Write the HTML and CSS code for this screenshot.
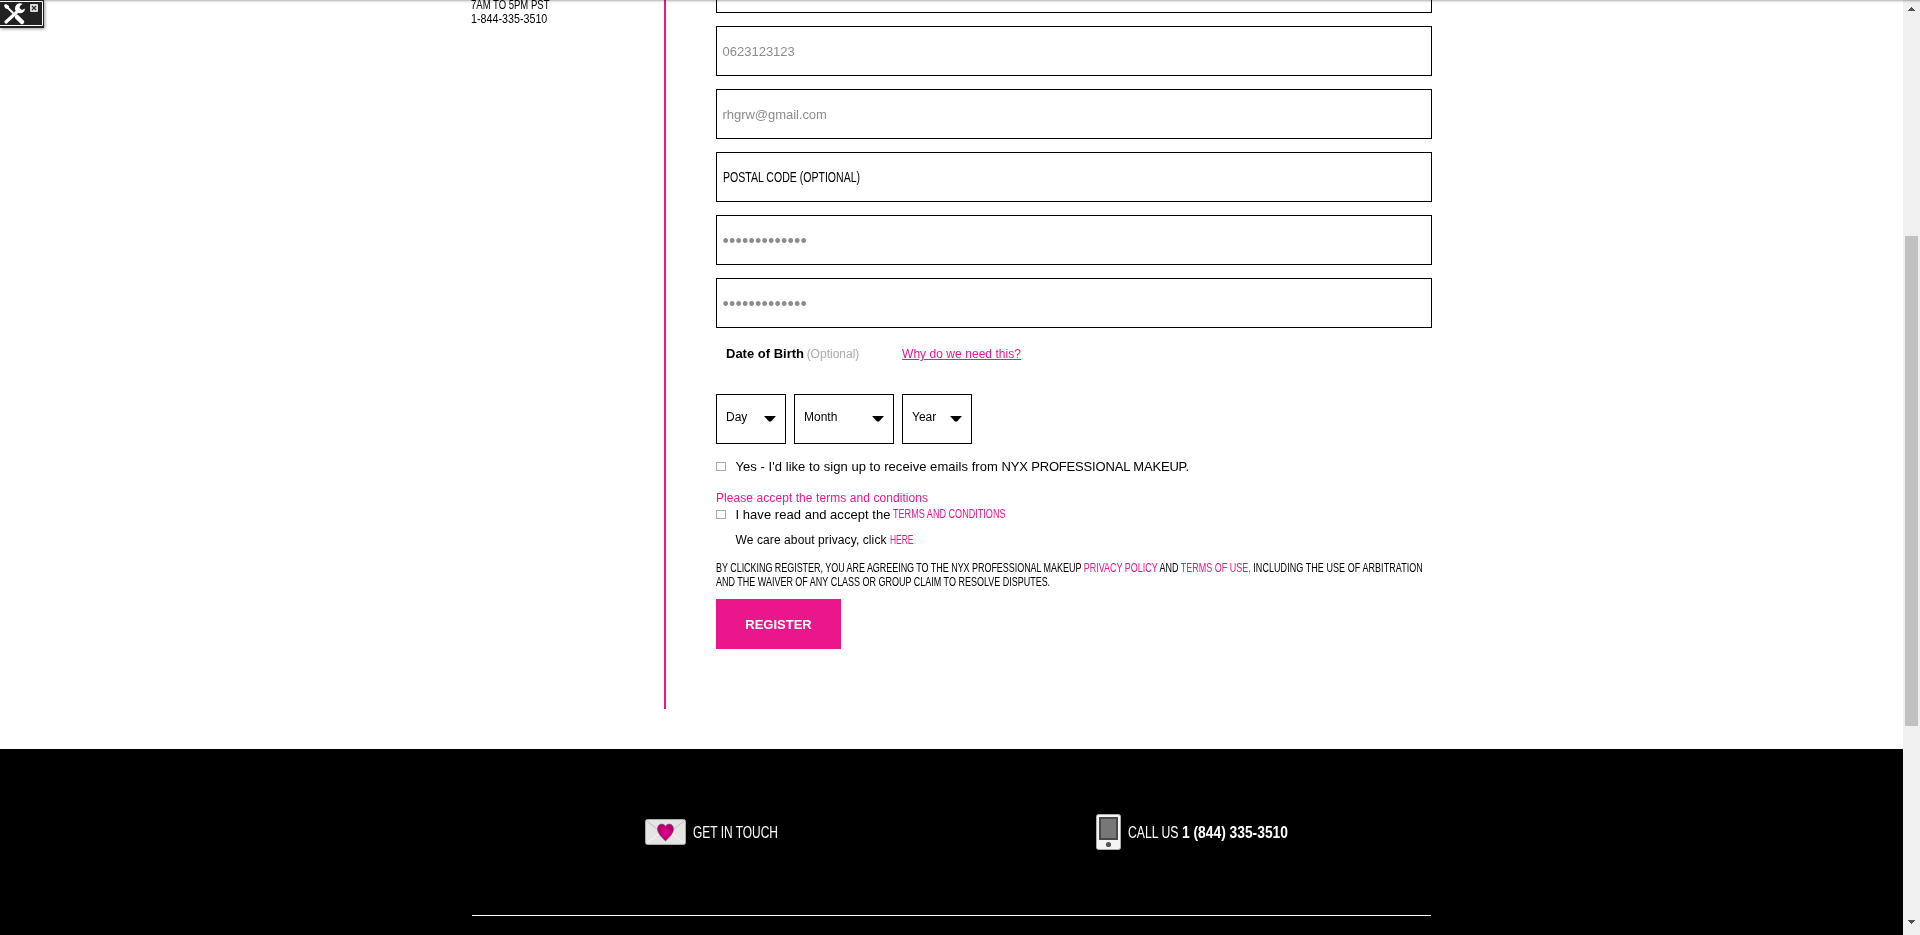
FILE: index.html
```
<!DOCTYPE html>
<html lang="en">
<head>
<meta charset="utf-8">
<title>Register</title>
<link rel="stylesheet" href="styles.css">
</head>
<body>
<div class="page">
  <main class="main">
    <aside class="side">
      <p class="side-line"><span class="cond hours">7AM TO 5PM PST</span></p>
      <p class="side-line"><span class="cond phone">1-844-335-3510</span></p>
    </aside>
    <form class="form">
      <div class="field field-cut"></div>
      <div class="field">0623123123</div>
      <div class="field email">rhgrw@gmail.com</div>
      <div class="field field-label"><span class="cond postal">POSTAL CODE (OPTIONAL)</span></div>
      <div class="field dots">•••••••••••••</div>
      <div class="field dots">•••••••••••••</div>
      <div class="dob">
        <div class="dob-title"><b>Date of Birth</b> <span class="optional">(Optional)</span></div>
        <a class="why">Why do we need this?</a>
      </div>
      <div class="selects">
        <div class="select">Day<svg class="caret" viewBox="0 0 12 6"><path d="M0 0H12L7 5.500H5Z"/></svg></div>
        <div class="select month"><span>Month</span><svg class="caret" viewBox="0 0 12 6"><path d="M0 0H12L7 5.500H5Z"/></svg></div>
        <div class="select">Year<svg class="caret" viewBox="0 0 12 6"><path d="M0 0H12L7 5.500H5Z"/></svg></div>
      </div>
      <div class="check news"><i class="box"></i><span>Yes - I'd like to sign up to receive emails from <span class="brand">NYX PROFESSIONAL MAKEUP.</span></span></div>
      <p class="error">Please accept the terms and conditions</p>
      <div class="check terms"><i class="box"></i><span>I have read and accept the</span><a class="cond terms-link">TERMS AND CONDITIONS</a></div>
      <p class="privacy"><span>We care about privacy, click</span><a class="cond here">HERE</a></p>
      <div class="legal">
        <p class="cond"><span class="lead">BY CLICKING REGISTER, YOU ARE AGREEING TO THE NYX PROFESSIONAL MAKEUP </span><a>PRIVACY POLICY</a> AND <a>TERMS OF USE,</a><span class="tail"> INCLUDING THE USE OF ARBITRATION</span></p>
        <p class="cond">AND THE WAIVER OF ANY CLASS OR GROUP CLAIM TO RESOLVE DISPUTES.</p>
      </div>
      <div class="register">REGISTER</div>
    </form>
  </main>
  <footer class="footer">
    <div class="contact">
      <div class="touch">
        <svg class="mail" viewBox="0 0 41 26">
          <defs><radialGradient id="heart"><stop offset="0" stop-color="#ee0090"/><stop offset="1" stop-color="#a8006c"/></radialGradient></defs>
          <rect x=".5" y=".5" width="40" height="25" rx="2" fill="#e4e4e4" stroke="#aaa"/>
          <path d="M2 2L17 14M39 2L24 14" stroke="#bcbcbc" fill="none"/>
          <path d="M2 24L16 13M39 24L25 13" stroke="#fafafa" fill="none"/>
          <path d="M20.500 22C17 18.500 12.500 14.500 12.500 10C12.500 4.500 18.500 3.500 20.500 7.500C22.500 3.500 28.500 4.500 28.500 10C28.500 14.500 24 18.500 20.500 22Z" fill="url(#heart)" stroke="#8a4c74" stroke-width=".6"/>
        </svg>
        <span class="cond touch-text">GET IN TOUCH</span>
      </div>
      <div class="call">
        <svg class="device" viewBox="0 0 25 36">
          <rect x=".5" y=".5" width="24" height="35" rx="2" fill="#f4f4f4" stroke="#aaa"/>
          <rect x="3" y="3" width="19" height="23" fill="#484848"/>
          <rect x="5" y="5" width="15" height="19" fill="#777"/>
          <circle cx="12.500" cy="30.500" r="2.600" fill="#555"/>
        </svg>
        <span class="cond call-text">CALL US</span>
        <b class="cond call-number">1 (844) 335-3510</b>
      </div>
    </div>
  </footer>
</div>
<div class="scrollbar">
  <svg class="arrow" viewBox="0 0 7 4"><path d="M0 4V3H1V2H2V1H3V0H4V1H5V2H6V3H7V4Z"/></svg>
  <div class="thumb"></div>
  <svg class="arrow" viewBox="0 0 7 4"><path d="M0 0V1H1V2H2V3H3V4H4V3H5V2H6V1H7V0Z"/></svg>
</div>
<div class="topline"></div>
<div class="tool">
  <svg viewBox="0 0 44 28">
    <rect x="0" y="0" width="44" height="28" fill="#222"/>
    <path d="M0 1.500H42.500V25.500H0" fill="none" stroke="#fff"/>
    <path d="M6 6L14 14" stroke="#fff" stroke-width="2"/>
    <path d="M4 5L6 4L9 6V8L7 9L5 8Z" fill="#fff"/>
    <path d="M17 17L22 22" stroke="#fff" stroke-width="4.500" stroke-linecap="round"/>
    <path d="M6 22L19 10" stroke="#fff" stroke-width="3.200" stroke-linecap="round"/>
    <path d="M22.500 4A5 5 0 1 0 25 8.500L22 10L19.500 8L20 6Z" fill="#fff"/>
    <rect x="30" y="4" width="8" height="8" rx="1" fill="#ddd"/>
    <path d="M32 6L36 10M36 6L32 10" stroke="#333" stroke-width="1.300"/>
  </svg>
</div>
</body>
</html>
```
FILE: styles.css
```
* { box-sizing: border-box; }
body {
  margin: 0;
  height: 935px;
  overflow: hidden;
  display: flex;
  background: #fff;
  color: #000;
  font: 13px "Liberation Sans", Arial, sans-serif;
  white-space: nowrap;
}
p { margin: 0; }
svg { display: block; flex: none; }
a { color: #ec168c; }

/* condensed lettering */
.cond { display: inline-block; transform-origin: 0 50%; }

.page { width: 1903px; }
.main { display: flex; height: 749px; padding-left: 472px; }
.side { width: 192px; }
.side-line { height: 14px; line-height: 14px; margin-left: -1px; }
.side-line:first-child { height: 12px; line-height: 9px; }
.hours { transform: scaleX(.732); }
.phone { transform: scaleX(.825); }

.form {
  height: 709px;
  width: 768px;
  border-left: 2px solid #ec168c;
  padding-left: 50px;
}
.field {
  height: 50px;
  margin-bottom: 13px;
  border: 1px solid #000;
  padding-left: 5.5px;
  line-height: 49px;
  color: #8c8c8c;
}
.field-cut { height: 13px; border-top: 0; }
.email { letter-spacing: -.04px; }
.field-label { font-size: 14px; color: #000; }
.postal { transform: scaleX(.753); }
.dots { font-size: 18px; letter-spacing: .2px; padding-left: 5.6px; line-height: 51px; }
.dots + .dots { margin-bottom: 0; }

.dob { display: flex; height: 51px; line-height: 51px; margin-bottom: 15px; padding-left: 10px; }
.dob-title { width: 176px; }
.optional { font-size: 12px; color: #aaa; margin-left: -1px; }
.why { font-size: 12px; line-height: 52px; text-decoration: underline; letter-spacing: .05px; }

.selects { display: flex; gap: 8px; }
.select {
  display: flex;
  justify-content: space-between;
  width: 70px;
  height: 50px;
  padding: 0 9px;
  border: 1px solid #000;
  font-size: 12px;
  line-height: 44px;
}
.month { width: 100px; }
.caret { width: 12px; height: 6px; margin-top: 21px; }

.check { display: flex; align-items: center; }
.box { width: 10px; height: 9px; margin-right: 9.5px; border: 1px solid #aaa; }
.news { height: 45px; letter-spacing: .05px; }
.brand { letter-spacing: -.17px; }
.error { height: 18px; line-height: 18px; font-size: 12px; letter-spacing: .07px; color: #ec168c; }
.terms { height: 15px; line-height: 15px; letter-spacing: .04px; }
.terms-link { font-size: 12px; line-height: 17px; margin-left: 3px; transform: scaleX(.757); letter-spacing: 0; }
.privacy { height: 36px; line-height: 36px; padding-left: 19.5px; font-size: 12px; letter-spacing: .1px; }
.here { margin-left: 3px; transform: scaleX(.705); letter-spacing: 0; }
.legal { padding-top: 3px; height: 41px; line-height: 14px; }
.legal .cond { display: block; transform: scaleX(.691); }
.lead { letter-spacing: -.05px; }
.tail { letter-spacing: .1px; }
.register {
  width: 125px;
  height: 50px;
  background: #ec168c;
  color: #fff;
  font-weight: bold;
  line-height: 51px;
  text-align: center;
}

.footer { height: 186px; padding-left: 472px; background: #000; color: #fff; }
.contact {
  display: flex;
  height: 167px;
  width: 959px;
  padding: 65px 0 0 173px;
  border-bottom: 1px solid #fff;
  font-size: 16px;
}
.touch, .call { display: flex; align-items: center; height: 36px; line-height: 20px; }
.touch { width: 451px; }
.mail { width: 41px; height: 26px; }
.device { width: 25px; height: 36px; }
.touch .cond, .call .cond { padding-top: 2px; }
.touch-text { margin-left: 7px; transform: scaleX(.747); }
.call-text { width: 54px; margin-left: 7px; transform: scaleX(.764); }
.call-number { transform: scaleX(.863); }

.scrollbar {
  display: flex;
  flex-direction: column;
  align-items: center;
  width: 17px;
  height: 935px;
  padding: 7px 0;
  background: #f0f0f0;
}
.arrow { width: 7px; height: 4px; fill: #505050; }
.thumb { width: 13px; height: 490px; margin: 225px 0 194px; background: #c1c1c1; }

.topline {
  position: absolute;
  inset: 0 0 auto 0;
  height: 3px;
  background: linear-gradient(#c6c6c6 0 1px, #e6e6e6 1px 2px, #f7f7f7 2px);
  mix-blend-mode: multiply;
}
.tool { position: absolute; left: 0; top: 0; width: 44px; height: 28px; box-shadow: 1px 1px 3px #999; }
.tool svg { width: 44px; height: 28px; }
```
